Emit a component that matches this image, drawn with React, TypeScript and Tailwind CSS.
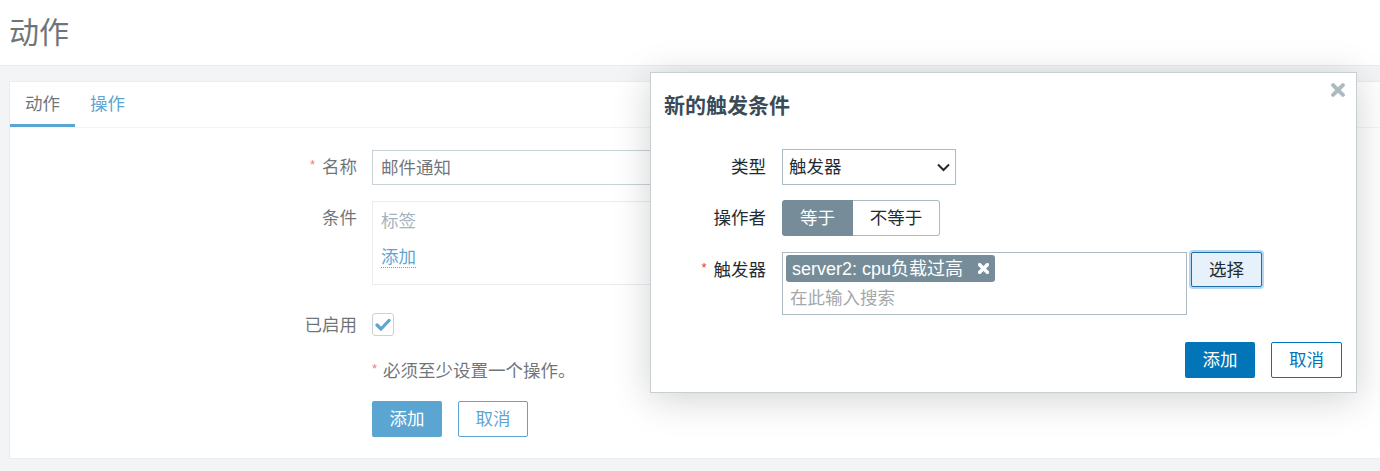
const Asterisk = () => (
  <span className="text-[#e33734] text-[13px] relative top-[-4px] mr-[7px]">*</span>
);

const CheckIcon = () => (
  <svg width="16" height="14" viewBox="0 0 16 14" fill="none">
    <polyline points="2,7 6,11 14,2.5" stroke="#0275b8" strokeWidth="3.2" strokeLinecap="round" strokeLinejoin="round" />
  </svg>
);

const CloseIcon = ({ size, color, weight }: { size: number; color: string; weight: number }) => (
  <svg width={size} height={size} viewBox="0 0 10 10" fill="none">
    <path d="M1.5 1.5 L8.5 8.5 M8.5 1.5 L1.5 8.5" stroke={color} strokeWidth={weight} strokeLinecap="round" />
  </svg>
);

const Chevron = () => (
  <svg width="13" height="9" viewBox="0 0 13 9" fill="none">
    <polyline points="1,1.5 6.5,7 12,1.5" stroke="#1f2c33" strokeWidth="2" />
  </svg>
);

const App = () => {
  return (
    <div className="relative w-[1380px] h-[471px] overflow-hidden bg-[#ebeef0] text-[17.5px] leading-[20px] text-[#1f2c33] font-[family-name:Liberation_Sans,Noto_Sans_CJK_SC,sans-serif]">
      {/* page header */}
      <header className="h-[66px] bg-white border-b border-[#dfe4e7] flex items-center pl-[9px]">
        <h1 className="text-[30px] leading-[36px] font-normal">动作</h1>
      </header>

      <div className="pt-[15px] pl-[9px]">
        <div className="w-[1400px] h-[378px] bg-white border border-[#dfe4e7]">
          {/* tabs */}
          <div className="flex border-b border-[#ebeef0]">
            <div className="px-[15px] pt-[12px] pb-[10px] border-b-[3px] border-[#0275b8]">动作</div>
            <div className="px-[15px] pt-[12px] pb-[10px] border-b-[3px] border-transparent text-[#0275b8]">
              操作
            </div>
          </div>

          {/* form */}
          <div className="pt-[22px]">
            <div className="flex items-center">
              <div className="w-[362px] pr-[15px] text-right">
                <Asterisk />
                名称
              </div>
              <div className="h-[35px] w-[460px] border border-[#acbbc2] px-[8px] flex items-center">邮件通知</div>
            </div>

            <div className="flex items-start mt-[16px]">
              <div className="w-[362px] pr-[15px] pt-[7px] text-right">条件</div>
              <div className="w-[460px] border border-[#dfe4e7] px-[8px] pt-[9px] pb-[16px]">
                <div className="text-[#768d99]">标签</div>
                <span className="inline-block mt-[16px] text-[#0275b8] border-b border-dotted border-[#0275b8]">添加</span>
              </div>
            </div>

            <div className="flex items-center mt-[28px]">
              <div className="w-[362px] pr-[15px] text-right">已启用</div>
              <div className="w-[22px] h-[23px] border border-[#acbbc2] rounded-[3px] flex items-center justify-center">
                <CheckIcon />
              </div>
            </div>

            <div className="flex mt-[25px]">
              <div className="w-[362px]" />
              <div>
                <span className="text-[#e33734] text-[13px] relative top-[-4px] mr-[6px]">*</span>
                必须至少设置一个操作。
              </div>
            </div>

            <div className="flex mt-[18px]">
              <div className="w-[362px]" />
              <div className="flex gap-[16px]">
                <button className="h-[36px] w-[70px] bg-[#0275b8] text-white rounded-[2px]">添加</button>
                <button className="h-[36px] w-[70px] bg-white border border-[#0275b8] text-[#0275b8] rounded-[2px]">
                  取消
                </button>
              </div>
            </div>
          </div>
        </div>
      </div>

      {/* dim layer behind the dialog */}
      <div className="absolute inset-0 bg-white/35" />

      {/* dialog */}
      <div className="absolute left-[650px] top-[72px] w-[707px] bg-white border border-[#c7cfd3] shadow-[0_6px_36px_rgba(0,0,0,0.18)]">
        <div className="absolute right-[11px] top-[10px]">
          <CloseIcon size={14} color="#acbbc2" weight={2.8} />
        </div>
        <h4 className="pl-[13px] pt-[21px] text-[21px] leading-[24px] font-bold text-[#3a4b57]">新的触发条件</h4>

        <div className="mt-[31px]">
          <div className="flex items-center">
            <div className="w-[131px] pr-[16px] text-right">类型</div>
            <div className="h-[36px] w-[174px] border border-[#acbbc2] pl-[6px] pr-[5px] flex items-center justify-between">
              <span>触发器</span>
              <Chevron />
            </div>
          </div>

          <div className="flex items-center mt-[15px]">
            <div className="w-[131px] pr-[16px] text-right">操作者</div>
            <div className="flex h-[36px]">
              <div className="w-[71px] bg-[#768d99] text-white rounded-l-[3px] flex items-center justify-center">等于</div>
              <div className="w-[87px] border border-l-0 border-[#acbbc2] rounded-r-[3px] flex items-center justify-center">
                不等于
              </div>
            </div>
          </div>

          <div className="flex items-start mt-[16px]">
            <div className="w-[131px] pr-[16px] pt-[8px] text-right">
              <Asterisk />
              触发器
            </div>
            <div className="w-[405px] h-[63px] border border-[#acbbc2] pl-[3px] pt-[2px]">
              <div className="inline-flex items-center h-[27px] pl-[6px] pr-[6px] bg-[#768d99] text-white text-[18px] rounded-[3px]">
                <span>server2: cpu负载过高</span>
                <span className="ml-[15px]">
                  <CloseIcon size={11} color="#ffffff" weight={3.2} />
                </span>
              </div>
              <div className="mt-[6px] pl-[4px] text-[#a4a8ab]">在此输入搜索</div>
            </div>
            <button className="ml-[4px] h-[35px] w-[71px] bg-[#e6f1fb] border border-[#1f6ea5] rounded-[2px] shadow-[0_0_0_2px_#b6d6f0]">
              选择
            </button>
          </div>
        </div>

        <div className="flex justify-end gap-[16px] pr-[14px] pt-[27px] pb-[14px]">
          <button className="h-[36px] w-[70px] bg-[#0275b8] text-white rounded-[2px]">添加</button>
          <button className="h-[36px] w-[71px] bg-white border border-[#0275b8] text-[#0275b8] rounded-[2px]">取消</button>
        </div>
      </div>
    </div>
  );
};

export default App;
